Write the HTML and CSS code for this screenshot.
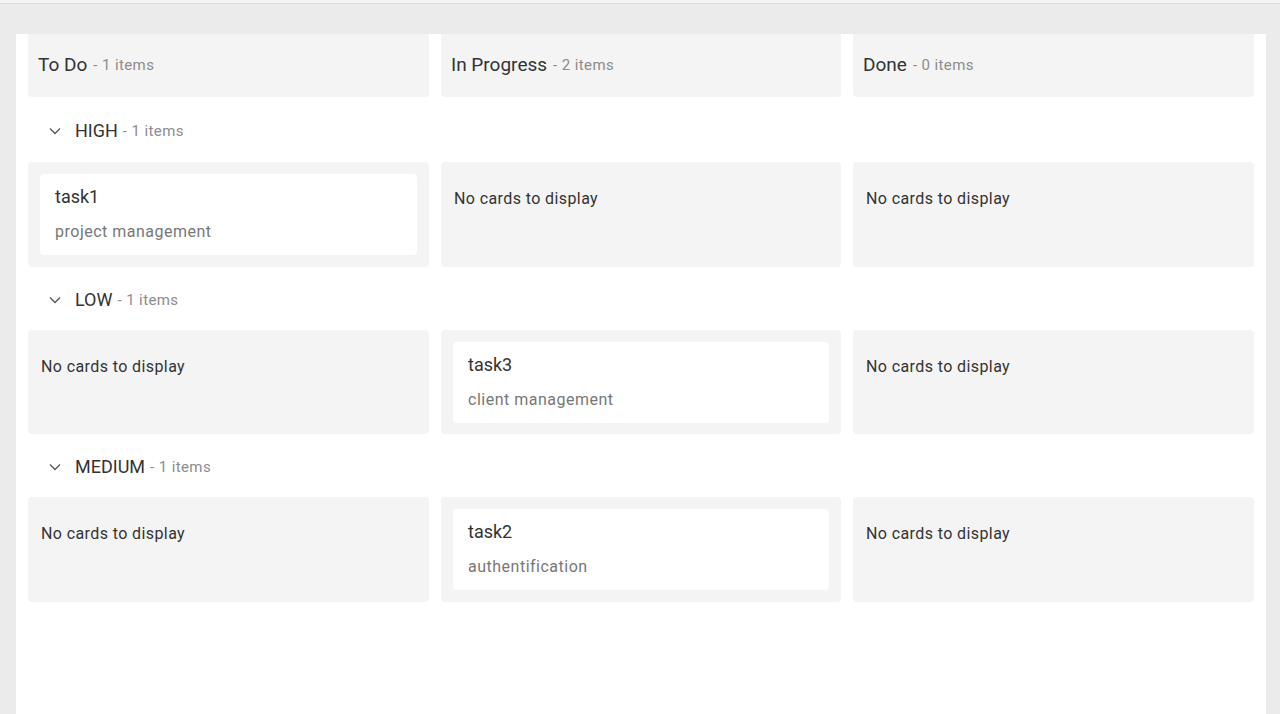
FILE: index.html
```html
<!DOCTYPE html>
<html>
<head>
<meta charset="utf-8">
<link rel="stylesheet" href="styles.css">
</head>
<body>
<div class="topline"></div>
<main class="panel">
  <div class="board-head">
    <div class="col-head"><span class="col-title">To Do</span><span class="count">- 1 items</span></div>
    <div class="col-head"><span class="col-title">In Progress</span><span class="count">- 2 items</span></div>
    <div class="col-head"><span class="col-title">Done</span><span class="count">- 0 items</span></div>
  </div>

  <section class="group first">
    <div class="group-head">
      <svg class="chev" width="14" height="14" viewBox="0 0 14 14"><path d="M2 4.5 L7 9.5 L12 4.5" fill="none" stroke="#555" stroke-width="1.3"/></svg>
      <span class="group-title">HIGH</span><span class="count">- 1 items</span>
    </div>
    <div class="lanes">
      <div class="lane"><div class="card"><div class="card-title">task1</div><div class="card-sub">project management</div></div></div>
      <div class="lane"><div class="empty">No cards to display</div></div>
      <div class="lane"><div class="empty">No cards to display</div></div>
    </div>
  </section>

  <section class="group">
    <div class="group-head">
      <svg class="chev" width="14" height="14" viewBox="0 0 14 14"><path d="M2 4.5 L7 9.5 L12 4.5" fill="none" stroke="#555" stroke-width="1.3"/></svg>
      <span class="group-title">LOW</span><span class="count">- 1 items</span>
    </div>
    <div class="lanes">
      <div class="lane"><div class="empty">No cards to display</div></div>
      <div class="lane"><div class="card"><div class="card-title">task3</div><div class="card-sub">client management</div></div></div>
      <div class="lane"><div class="empty">No cards to display</div></div>
    </div>
  </section>

  <section class="group">
    <div class="group-head">
      <svg class="chev" width="14" height="14" viewBox="0 0 14 14"><path d="M2 4.5 L7 9.5 L12 4.5" fill="none" stroke="#555" stroke-width="1.3"/></svg>
      <span class="group-title">MEDIUM</span><span class="count">- 1 items</span>
    </div>
    <div class="lanes">
      <div class="lane"><div class="empty">No cards to display</div></div>
      <div class="lane"><div class="card"><div class="card-title">task2</div><div class="card-sub">authentification</div></div></div>
      <div class="lane"><div class="empty">No cards to display</div></div>
    </div>
  </section>
</main>
</body>
</html>
```

FILE: styles.css
```css
html, body {
  margin: 0;
  padding: 0;
  height: 100%;
}
body {
  background: #ebebeb;
  font-family: Roboto, "Liberation Sans", sans-serif;
  color: #333;
  display: flex;
  flex-direction: column;
  overflow: hidden;
}
.topline {
  height: 3px;
  background: #f4f4f4;
  border-bottom: 1px solid #dcdcdc;
  flex: none;
}
.panel {
  margin: 30px 14px 0 16px;
  background: #fff;
  flex: 1;
  padding: 0 12px;
}
.board-head, .lanes {
  display: grid;
  grid-template-columns: 401px 400px 401px;
  column-gap: 12px;
}
.col-head {
  height: 63px;
  background: #f4f4f4;
  border-radius: 0 0 4px 4px;
  display: flex;
  align-items: center;
  padding: 0 10px 2px;
  box-sizing: border-box;
}
.col-title {
  font-size: 19px;
  color: #333;
}
.count {
  font-size: 15px;
  color: #8c8c8c;
  letter-spacing: 0.4px;
  margin-left: 6px;
  padding-top: 1px;
}
.group-head {
  height: 63px;
  display: flex;
  align-items: center;
  padding-left: 20px;
  box-sizing: border-box;
  padding-top: 2px;
}
.group.first .group-head {
  height: 65px;
}
.chev {
  margin-right: 13px;
  margin-top: 1px;
}
.group-title {
  font-size: 18px;
  color: #333;
}
.group-head .count {
  margin-left: 5px;
}
.lane {
  background: #f4f4f4;
  border-radius: 4px;
  height: 104.5px;
  padding: 12px;
  box-sizing: border-box;
}
.card {
  background: #fff;
  border-radius: 4px;
  padding: 11px 15px 12px;
}
.card-title {
  font-size: 18px;
  line-height: 24px;
  color: #333;
}
.card-sub {
  margin-top: 12px;
  font-size: 16px;
  line-height: 22px;
  color: #777;
  letter-spacing: 0.5px;
}
.empty {
  padding-top: 15px;
  font-size: 16px;
  line-height: 20px;
  color: #333;
  letter-spacing: 0.4px;
  padding-left: 1px;
}
```
